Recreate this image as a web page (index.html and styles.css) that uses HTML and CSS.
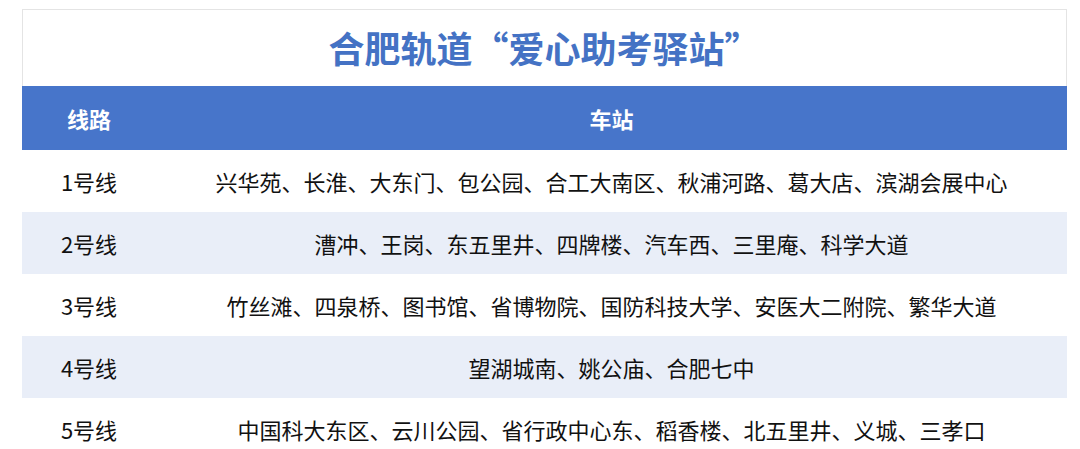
FILE: index.html
```html
<!DOCTYPE html>
<html lang="zh-CN">
<head>
<meta charset="utf-8">
<title>合肥轨道“爱心助考驿站”</title>
<link rel="stylesheet" href="styles.css">
</head>
<body>
<div class="sheet">
  <div class="title">合肥轨道“爱心助考驿站”</div>
  <table class="stations">
    <thead>
      <tr><th class="col-line">线路</th><th>车站</th></tr>
    </thead>
    <tbody>
      <tr><td class="col-line">1号线</td><td>兴华苑、长淮、大东门、包公园、合工大南区、秋浦河路、葛大店、滨湖会展中心</td></tr>
      <tr class="alt"><td class="col-line">2号线</td><td>漕冲、王岗、东五里井、四牌楼、汽车西、三里庵、科学大道</td></tr>
      <tr><td class="col-line">3号线</td><td>竹丝滩、四泉桥、图书馆、省博物院、国防科技大学、安医大二附院、繁华大道</td></tr>
      <tr class="alt"><td class="col-line">4号线</td><td>望湖城南、姚公庙、合肥七中</td></tr>
      <tr><td class="col-line">5号线</td><td>中国科大东区、云川公园、省行政中心东、稻香楼、北五里井、义城、三孝口</td></tr>
    </tbody>
  </table>
</div>
</body>
</html>
```

FILE: styles.css
```css
html, body {
  margin: 0;
  padding: 0;
  background: #ffffff;
}

body {
  font-family: "Noto Sans CJK SC", "Noto Sans", sans-serif;
  color: #111111;
}

.sheet {
  width: 1045px;
  margin: 9px 0 0 22px;
}

.title {
  height: 77px;
  border: 1px solid #e4e4e4;
  border-bottom: none;
  display: flex;
  align-items: center;
  justify-content: center;
  font-size: 36px;
  font-weight: 700;
  color: #4472c4;
  line-height: 1;
  padding-bottom: 2px;
  box-sizing: border-box;
}

.stations {
  width: 1045px;
  border-collapse: collapse;
  table-layout: fixed;
}

.stations th,
.stations td {
  padding: 0;
  text-align: center;
  font-size: 22px;
  line-height: 30px;
  white-space: nowrap;
}

.stations th {
  height: 64px;
  background: #4775ca;
  color: #ffffff;
  font-weight: 700;
}

.stations td {
  height: 62px;
  font-weight: 400;
}

.stations .col-line {
  width: 134px;
}

.stations tr.alt td {
  background: #e9eef8;
}
```
